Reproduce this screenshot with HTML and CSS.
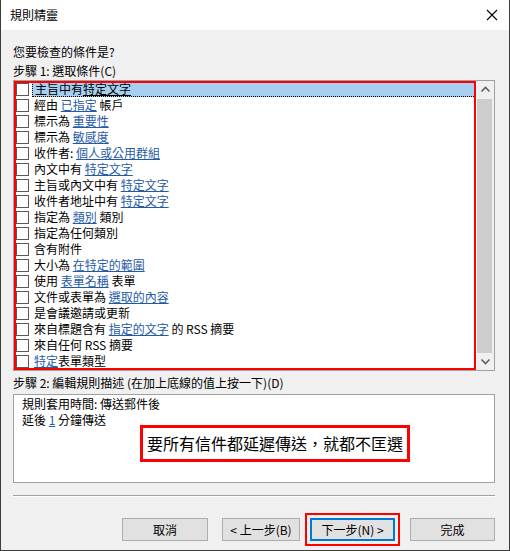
FILE: index.html
```html
<!DOCTYPE html>
<html lang="zh-Hant">
<head>
    <meta charset="UTF-8">
    <title>規則精靈</title>
    <link rel="stylesheet" href="styles.css">
</head>
<body>
    <div class="window">
        <div class="titlebar">
            <span class="title">規則精靈</span>
            <svg class="close" width="12" height="12" viewBox="0 0 12 12"><path d="M1 1L11 11M11 1L1 11" stroke="#000" stroke-width="1.1" fill="none"/></svg>
        </div>
        <div class="content">
            <div class="label first">您要檢查的條件是?</div>
            <div class="label">步驟 1: 選取條件(C)</div>
            <div class="listbox">
                <ul class="items">
                    <li class="item selected"><span class="box"></span><span class="text">主旨中有<u>特定文字</u></span></li>
                    <li class="item"><span class="box"></span><span class="text">經由 <a>已指定</a> 帳戶</span></li>
                    <li class="item"><span class="box"></span><span class="text">標示為 <a>重要性</a></span></li>
                    <li class="item"><span class="box"></span><span class="text">標示為 <a>敏感度</a></span></li>
                    <li class="item"><span class="box"></span><span class="text">收件者: <a>個人或公用群組</a></span></li>
                    <li class="item"><span class="box"></span><span class="text">內文中有 <a>特定文字</a></span></li>
                    <li class="item"><span class="box"></span><span class="text">主旨或內文中有 <a>特定文字</a></span></li>
                    <li class="item"><span class="box"></span><span class="text">收件者地址中有 <a>特定文字</a></span></li>
                    <li class="item"><span class="box"></span><span class="text">指定為 <a>類別</a> 類別</span></li>
                    <li class="item"><span class="box"></span><span class="text">指定為任何類別</span></li>
                    <li class="item"><span class="box"></span><span class="text">含有附件</span></li>
                    <li class="item"><span class="box"></span><span class="text">大小為 <a>在特定的範圍</a></span></li>
                    <li class="item"><span class="box"></span><span class="text">使用 <a>表單名稱</a> 表單</span></li>
                    <li class="item"><span class="box"></span><span class="text">文件或表單為 <a>選取的內容</a></span></li>
                    <li class="item"><span class="box"></span><span class="text">是會議邀請或更新</span></li>
                    <li class="item"><span class="box"></span><span class="text">來自標題含有 <a>指定的文字</a> 的 RSS 摘要</span></li>
                    <li class="item"><span class="box"></span><span class="text">來自任何 RSS 摘要</span></li>
                    <li class="item"><span class="box"></span><span class="text"><a>特定</a>表單類型</span></li>
                </ul>
                <div class="scrollbar">
                    <svg class="arrow" width="17" height="17" viewBox="0 0 17 17"><path d="M4.5 10.5L8.5 6.5L12.5 10.5" stroke="#606060" stroke-width="1.6" fill="none"/></svg>
                    <div class="thumb"></div>
                    <svg class="arrow" width="17" height="17" viewBox="0 0 17 17"><path d="M4.5 6.5L8.5 10.5L12.5 6.5" stroke="#606060" stroke-width="1.6" fill="none"/></svg>
                </div>
            </div>
            <div class="label step2">步驟 2: 編輯規則描述 (在加上底線的值上按一下)(D)</div>
            <div class="desc">
                <div>規則套用時間: 傳送郵件後</div>
                <div>延後 <a>1</a> 分鐘傳送</div>
                <div class="note">要所有信件都延遲傳送，就都不匡選</div>
            </div>
            <div class="separator"></div>
            <div class="buttons">
                <button class="btn cancel">取消</button>
                <button class="btn back">&lt; 上一步(B)</button>
                <span class="mark"><button class="btn next">下一步(N) &gt;</button></span>
                <button class="btn finish">完成</button>
            </div>
        </div>
    </div>
</body>
</html>
```

FILE: styles.css
```css
body { margin: 0; font-family: "Noto Sans CJK TC", "Liberation Sans", sans-serif; font-size: 12px; color: #000; }
.window { width: 510px; height: 551px; box-sizing: border-box; border: 1px solid #3c3c3c; border-top: none; background: #f0f0f0; }
.titlebar { height: 30px; background: #fff; display: flex; align-items: center; justify-content: space-between; padding: 0 11px 0 9px; }
.title { font-size: 12px; line-height: 16px; }
.close { display: block; }
.content { padding: 0 14px 0 12px; }
.label { line-height: 16px; }
.label.first { padding-top: 14px; height: 19px; }
.label + .label { height: 17px; }
.listbox { height: 291px; box-sizing: border-box; border: 1px solid #a0a0a0; background: #fff; display: flex; }
.items { flex: 1; margin: 0; padding: 0; list-style: none; outline: 2px solid #f00; outline-offset: -2px; overflow: hidden; }
.item { height: 16px; display: flex; align-items: center; padding-left: 2px; }
.box { width: 11px; height: 11px; border: 1px solid #5a5a5a; margin-right: 3px; flex: none; background: #fff; }
.text { flex: 1; line-height: 16px; padding-left: 2px; box-sizing: border-box; white-space: nowrap; }
.item.selected .text { background: #a6cff2; border: 1px dotted #000; border-right: none; border-top: none; line-height: 15px; }
a { color: #1f5ba6; text-decoration: underline; }
u { text-decoration: underline; }
.scrollbar { width: 17px; flex: none; background: #f0f0f0; display: flex; flex-direction: column; border-left: 1px solid #fff; }
.arrow { display: block; flex: none; }
.thumb { flex: 1; background: #cdcdcd; margin: 1px 2px 0 0; }
.step2 { margin-top: 4px; margin-bottom: 3px; }
.desc { position: relative; height: 89px; box-sizing: border-box; border: 1px solid #a0a0a0; background: #fff; padding: 1px 8px; line-height: 16px; }
.note { position: absolute; left: 126px; top: 30px; width: 270px; height: 37px; box-sizing: border-box; border: 3px solid #f00; background: #fff; font-size: 16px; line-height: 31px; text-align: center; }
.separator { margin-top: 12px; border-top: 1px solid #a0a0a0; border-bottom: 1px solid #fff; }
.buttons { display: flex; align-items: center; margin-top: 16px; padding-left: 109px; }
.btn { height: 23px; box-sizing: border-box; border: 1px solid #adadad; background: #e1e1e1; font-family: inherit; font-size: 12px; padding: 0; color: #000; }
.cancel { width: 86px; }
.back { width: 78px; margin-left: 14px; }
.mark { margin-left: 5px; border: 2px solid #f00; padding: 3px; display: flex; }
.next { width: 85px; border: 2px solid #0078d7; }
.finish { width: 85px; margin-left: 10px; }
```
